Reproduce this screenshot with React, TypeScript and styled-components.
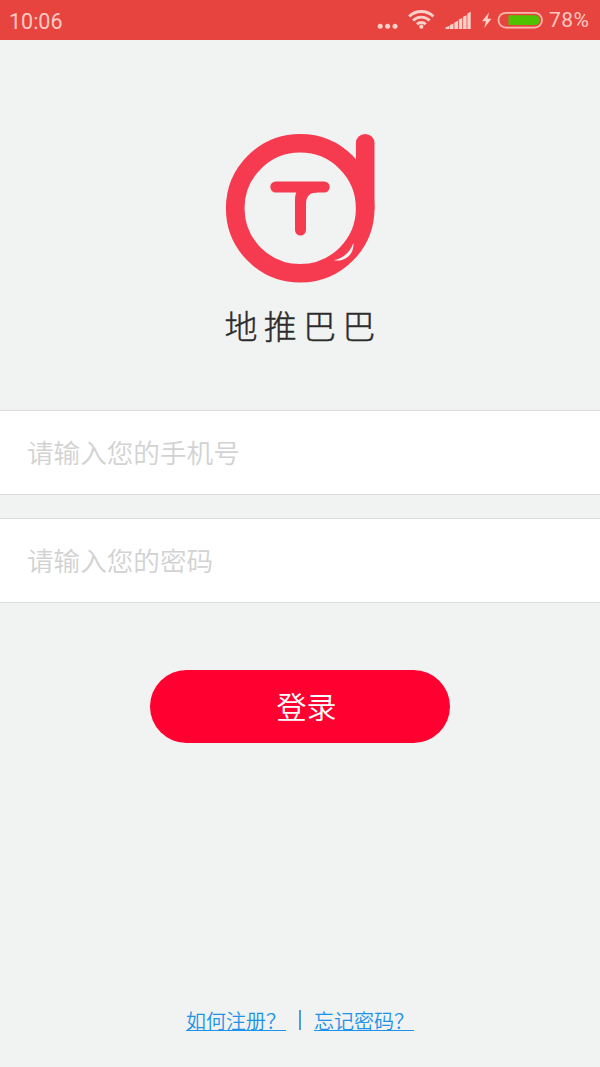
import React from 'react';
import styled, { createGlobalStyle } from 'styled-components';

const GlobalStyle = createGlobalStyle`
  * { box-sizing: border-box; }
  body { margin: 0; background: #f0f3f2; }
  body, input, button { font-family: "Noto Sans CJK SC", sans-serif; }
`;

const Screen = styled.div`
  width: 600px;
  height: 1067px;
  display: flex;
  flex-direction: column;
  align-items: center;
  background: #f0f3f2;
  overflow: hidden;
`;

const StatusBar = styled.header`
  width: 100%;
  height: 40px;
  flex: none;
  display: flex;
  justify-content: space-between;
  background: #e7443f;
  color: #fbc9c2;
  font-family: Roboto, sans-serif;
`;

const Clock = styled.span`
  padding-left: 9px;
  font-size: 21.5px;
  line-height: 43px;
`;

const StatusRight = styled.div`
  display: flex;
`;

const Percent = styled.span`
  width: 51px;
  font-size: 21px;
  letter-spacing: 0.5px;
  line-height: 41px;
`;

const Logo = styled.svg`
  flex: none;
  margin-top: 90px;
`;

const Title = styled.h1`
  margin: 12px 0 0;
  padding-left: 6px;
  height: 60px;
  font-size: 33px;
  line-height: 59px;
  font-weight: 300;
  letter-spacing: 6.3px;
  color: #2b2b2b;
  -webkit-text-stroke: 0.4px #2b2b2b;
`;

const Form = styled.form`
  width: 100%;
  margin-top: 54px;
  display: flex;
  flex-direction: column;
  align-items: center;
`;

const Field = styled.input`
  width: 100%;
  height: 85px;
  margin: 0 0 23px;
  padding: 0 27px 2px;
  border: solid #dbdddd;
  border-width: 1px 0;
  border-radius: 0;
  outline: none;
  background: #fff;
  font-size: 26.6px;
  font-weight: 350;
  color: #333;
  &::placeholder { color: #d2d2d2; opacity: 1; }
`;

const LoginButton = styled.button`
  width: 300px;
  height: 73px;
  margin-top: 44px;
  padding: 0 0 2px 13px;
  border: 0;
  border-radius: 37px;
  background: #ff0030;
  color: #fff;
  font-size: 30px;
  font-weight: 350;
  line-height: 71px;
`;

const Links = styled.nav`
  margin-top: auto;
  height: 65px;
  display: flex;
  align-items: flex-start;
`;

const TextLink = styled.a`
  font-size: 20px;
  font-weight: 350;
  line-height: 38px;
  color: #1e92e8;
  text-decoration: underline;
  text-decoration-thickness: 1px;
  text-underline-offset: 1px;
`;

const Divider = styled.span`
  width: 2px;
  height: 20px;
  margin: 8px 13px 0;
  background: #4a9fdd;
`;

const StatusIcons = () => (
  <svg width="174" height="40" viewBox="375 0 174 40" fill="#fbd0c8">
    <circle cx="380.2" cy="26.3" r="2.5" />
    <circle cx="387.6" cy="26.3" r="2.5" />
    <circle cx="395" cy="26.3" r="2.5" />
    <g fill="none" stroke="#fbd0c8" strokeWidth="2.9">
      <path d="M409.2 16.6a17 17 0 0 1 24.2 0" />
      <path d="M413 20.6a11.7 11.7 0 0 1 16.6 0" />
      <path d="M416.9 24.3a6.2 6.2 0 0 1 8.8 0" />
    </g>
    <circle cx="421.3" cy="26.7" r="2.1" />
    <path d="M445.5 29v-1.5l4-1.8v3.3zM450 29v-4l3.5-1.5V29zM454.4 29v-6.6l3.5-1.6V29zM458.8 29v-9.5l3.5-1.6V29zM463.1 29V16.8l3.5-1.6V29zM467.4 29V13.6l3.3-1.8V29z" />
    <path d="M489 12.5l-7 8.7h4l-1.8 6.8 7.3-9.3h-4z" />
    <rect x="498.5" y="12.8" width="43.5" height="14.8" rx="7.4" fill="none" stroke="#f9b9ac" strokeWidth="1.8" />
    <path d="M508.5 15.3H535a4.9 4.9 0 0 1 0 9.8h-26.5z" fill="#4fc100" />
  </svg>
);

const BrandLogo = () => (
  <Logo width="152" height="154" viewBox="224 130 152 154">
    <g fill="none" stroke="#f63a50" strokeLinecap="round">
      <circle cx="300.2" cy="208.3" r="65" strokeWidth="18.6" />
      <path d="M365.2 143.2v65" strokeWidth="18.6" />
      <path d="M275.8 187h48.4" strokeWidth="11" />
    </g>
    <path d="M297.5 190q-2.500 3.500-2.500 10v30a5.500 5.500 0 0 0 11 0v-26q0-11.500 11-11.500v-2.500z" fill="#f63a50" />
    <path d="M353.400 243c-3 8.500-9.200 15-19.400 17.300 11.500 2 20.200-6.300 19.400-17.300z" fill="#f0f3f2" />
  </Logo>
);

export default function App() {
  return (
    <>
      <GlobalStyle />
      <Screen>
        <StatusBar>
          <Clock>10:06</Clock>
          <StatusRight>
            <StatusIcons />
            <Percent>78%</Percent>
          </StatusRight>
        </StatusBar>
        <BrandLogo />
        <Title>地推巴巴</Title>
        <Form onSubmit={(e) => e.preventDefault()}>
          <Field type="tel" placeholder="请输入您的手机号" />
          <Field type="password" placeholder="请输入您的密码" />
          <LoginButton type="submit">登录</LoginButton>
        </Form>
        <Links>
          <TextLink>如何注册？</TextLink>
          <Divider />
          <TextLink>忘记密码？</TextLink>
        </Links>
      </Screen>
    </>
  );
}
